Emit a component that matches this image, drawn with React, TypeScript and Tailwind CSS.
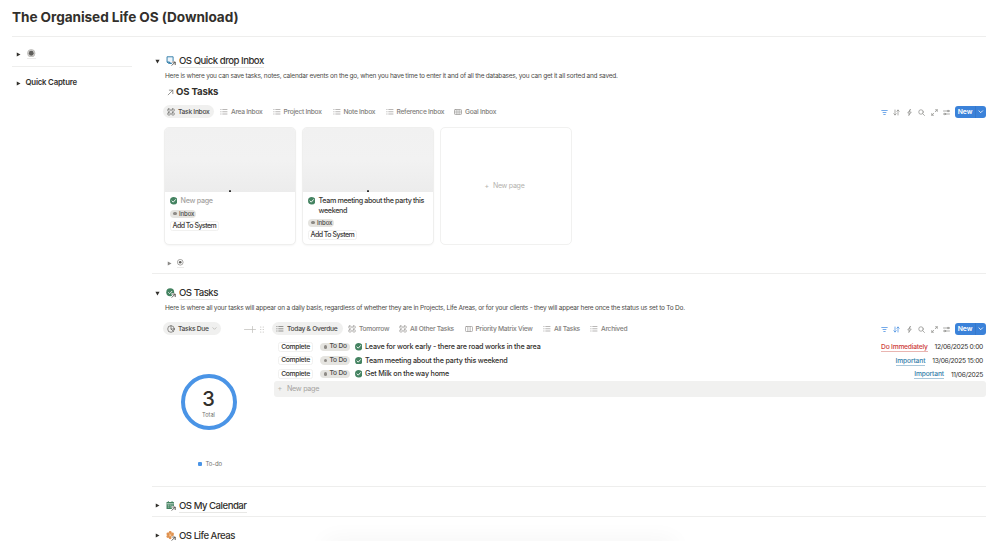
import React from "react";

type IconProps = { className?: string };

const stroke = {
  fill: "none",
  stroke: "currentColor",
  strokeWidth: 1.4,
  strokeLinecap: "round" as const,
  strokeLinejoin: "round" as const,
};

const BoardIcon = ({ className = "size-2" }: IconProps) => (
  <svg viewBox="0 0 16 16" className={className} {...stroke}>
    <rect x="1.5" y="2" width="5" height="4.5" rx="1.2" />
    <rect x="9.5" y="2" width="5" height="4.5" rx="1.2" />
    <rect x="1.5" y="9.5" width="5" height="4.5" rx="1.2" />
    <rect x="9.5" y="9.5" width="5" height="4.5" rx="1.2" />
  </svg>
);
const ListIcon = ({ className = "size-2" }: IconProps) => (
  <svg viewBox="0 0 16 16" className={className} {...stroke}>
    <path d="M5.500 3h8.500M5.500 7.500h8.500M5.500 12h8.500M1.500 3h.6M1.500 7.500h.6M1.500 12h.6" />
  </svg>
);
const TableIcon = ({ className = "size-2" }: IconProps) => (
  <svg viewBox="0 0 16 16" className={className} {...stroke}>
    <rect x="1" y="3" width="14" height="10" rx="1.5" />
    <path d="M1 6.300h14M1 9.700h14M5.700 3v10M10.300 3v10" strokeWidth={1.1} />
  </svg>
);
const ColumnsIcon = ({ className = "size-2" }: IconProps) => (
  <svg viewBox="0 0 16 16" className={className} {...stroke}>
    <rect x="1" y="3" width="14" height="10" rx="1.5" />
    <path d="M5.700 3v10M10.300 3v10" />
  </svg>
);
const PieIcon = ({ className = "size-2" }: IconProps) => (
  <svg viewBox="0 0 16 16" className={className} {...stroke} strokeWidth={1.2}>
    <circle cx="8" cy="8" r="6.6" />
    <path d="M8 1.400V8l4.600 4.600M8 8h6.600" />
  </svg>
);
const Chevron = ({ className = "size-1.5" }: IconProps) => (
  <svg viewBox="0 0 12 12" className={className} {...stroke} strokeWidth={1.8}>
    <path d="M2 4l4 4 4-4" />
  </svg>
);
const CheckIcon = ({ className = "size-[7px]" }: IconProps) => (
  <svg viewBox="0 0 16 16" className={`shrink-0 ${className}`}>
    <circle cx="8" cy="8" r="8" fill="#448361" />
    <path d="M4.400 8.400l2.500 2.600 4.800-5.400" fill="none" stroke="#fff" strokeWidth="2" strokeLinecap="round" strokeLinejoin="round" />
  </svg>
);
const ArrowBadge = () => (
  <g fill="none" strokeLinecap="square">
    <path d="M11.500 17.500L17 12M12.800 11.500h4.700v4.700" stroke="#fff" strokeWidth="4.400" />
    <path d="M11.500 17.500L17 12M12.800 11.500h4.700v4.700" stroke="#55534e" strokeWidth="1.800" />
  </g>
);
const InboxLinkIcon = () => (
  <svg viewBox="0 0 19 19" className="size-[10px]">
    <path d="M2 1.500h11.500v12.300H4.200L2 11.600z" fill="#eef5fb" stroke="#337ea9" strokeWidth="1.800" />
    <path d="M2 11.600h4l1.500 2h4" fill="none" stroke="#337ea9" strokeWidth="2" />
    <ArrowBadge />
  </svg>
);
const TaskLinkIcon = () => (
  <svg viewBox="0 0 19 19" className="size-[10px]">
    <circle cx="8" cy="8" r="7.500" fill="#448361" />
    <path d="M4.400 8.200l2.500 2.500 4.800-5" fill="none" stroke="#fff" strokeWidth="1.600" />
    <ArrowBadge />
  </svg>
);
const CalendarLinkIcon = () => (
  <svg viewBox="0 0 19 19" className="size-[10px]">
    <path d="M1 2h2.500V.5h2V2h5V.5h2V2H15v13H1z" fill="#448361" />
    <path d="M1.500 5.200h13M3.500 8h2M7 8h2M10.500 8h2M3.500 11.500h2M7 11.500h2" stroke="#fff" strokeWidth="1.200" />
    <ArrowBadge />
  </svg>
);
const LifeLinkIcon = () => (
  <svg viewBox="0 0 19 19" className="size-[10px]">
    <g fill="#e09250">
      <circle cx="8" cy="3" r="2.800" />
      <circle cx="12.300" cy="5.500" r="2.800" />
      <circle cx="12.300" cy="10.500" r="2.800" />
      <circle cx="8" cy="13" r="2.800" />
      <circle cx="3.700" cy="10.500" r="2.800" />
      <circle cx="3.700" cy="5.500" r="2.800" />
    </g>
    <circle cx="8" cy="8" r="2.200" fill="#f6dfca" stroke="#d9730d" />
    <ArrowBadge />
  </svg>
);

const Triangle = ({ open = false, className = "text-[#32302c]" }: { open?: boolean; className?: string }) => (
  <svg viewBox="0 0 10 10" className={`size-[5px] shrink-0 ${className}`}>
    <path d={open ? "M.8 1.500h8.400L5 9z" : "M1.500 .8v8.400L9 5z"} fill="currentColor" />
  </svg>
);

const Target = ({ filled = false }: { filled?: boolean }) => (
  <span className={`flex border-b border-[#ecebea] ${filled ? "pb-px" : "pt-px pb-px"}`}>
    <svg viewBox="0 0 16 16" className={filled ? "size-[8.500px]" : "size-[6.500px]"}>
      <circle cx="8" cy="8" r="7" fill={filled ? "#d0cfcd" : "none"} stroke={filled ? "#b9b7b4" : "#73726e"} strokeWidth="1.500" />
      <circle cx="8" cy="8" r={filled ? 4.5 : 3.2} fill="#5f5e5b" />
    </svg>
  </span>
);

const Heading = ({ icon, label, open = false }: { icon: React.ReactNode; label: string; open?: boolean }) => (
  <div className="flex h-4 items-center pl-[3px]">
    <Triangle open={open} />
    <span className="ml-[6px] flex w-[10px]">{icon}</span>
    <span className="ml-[3px] border-b border-[#e8e8e6] pt-px text-[9.600px] leading-[12px] font-medium tracking-[-0.49px]">{label}</span>
  </div>
);

type TabData = { label: string; icon: React.ReactNode; width: string };
const Tab = ({ label, icon, width, active = false }: TabData & { active?: boolean }) => (
  <div className={`flex h-[13px] shrink-0 items-center gap-[3px] rounded-full pl-[4px] text-[6.700px] font-medium tracking-[-0.29px] ${width} ${active ? "bg-[#f0f0ef] text-[#4b4a47]" : "text-[#82807c]"}`}>
    <span className="opacity-80">{icon}</span>
    <span className="pt-px">{label}</span>
  </div>
);

const Toolbar = ({ sorted = false }: { sorted?: boolean }) => (
  <div className="ml-auto flex items-center pt-px text-[#8a8986]">
    <div className="flex gap-[5.500px]">
      <svg viewBox="0 0 14 14" className="size-[7px] text-[#5b9be6]" {...stroke} strokeWidth={1.7}><path d="M1.500 3h11M4 7h6M5.500 11h3" /></svg>
      <svg viewBox="0 0 14 14" className={`size-[7px] ${sorted ? "text-[#3f8ae0]" : ""}`} {...stroke}><path d="M4 2v10M1.500 9.500L4 12l2.500-2.500M10 12V2M7.500 4.500L10 2l2.500 2.500" /></svg>
      <svg viewBox="0 0 14 14" className="size-[7px]" {...stroke}><path d="M8.500 1L3.500 8h3.200L5.500 13l5-7H7.300z" /></svg>
      <svg viewBox="0 0 14 14" className="size-[7px]" {...stroke}><circle cx="6" cy="6" r="4.500" /><path d="M9.500 9.500L13 13" /></svg>
      <svg viewBox="0 0 14 14" className="size-[7px]" {...stroke}><path d="M8.500 5.500L12.500 1.500M9 1.500h3.500V5M5.500 8.500L1.500 12.500M1.500 9v3.500H5" /></svg>
      <svg viewBox="0 0 14 14" className="size-[7px]" {...stroke}><path d="M1 4h7.500M12 4h1M1 10h1M5.500 10H13" /><circle cx="10.200" cy="4" r="1.600" /><circle cx="3.800" cy="10" r="1.600" /></svg>
    </div>
    <div className="ml-[5px] flex h-[12.500px] w-[31px] items-center rounded-[3px] bg-[#3b82d9] text-white">
      <span className="w-5 text-center text-[6.800px] font-semibold tracking-[-0.1px]">New</span>
      <span className="flex h-full flex-1 items-center justify-center border-l border-[#3778ca]"><Chevron className="size-[5.500px]" /></span>
    </div>
  </div>
);

const Status = ({ label, className }: { label: string; className: string }) => (
  <span className={`flex items-center gap-[2.500px] rounded-full bg-[#e5e4e0] pl-[3.500px] font-medium text-[#4b4a47] ${className}`}>
    <span className="size-[3.500px] shrink-0 rounded-full bg-[#8e8b86]" />
    <span>{label}</span>
  </span>
);

const Card = ({ title, empty = false }: { title: string; empty?: boolean }) => (
  <div className="flex h-[118px] w-[132px] flex-col overflow-hidden rounded-[5px] border border-[#efefee] bg-white shadow-[0_1px_2px_rgba(0,0,0,0.04)]">
    <div className="flex h-[64px] shrink-0 items-end justify-center bg-linear-to-b from-[#f1f1f1] via-[#f2f2f2] to-[#ececec]">
      <span className="h-[1.500px] w-[2px] rounded-t-full bg-[#333]" />
    </div>
    <div className="flex flex-col items-start pt-[4px] pl-[5px]">
      <div className="flex items-start gap-[3.500px]">
        <CheckIcon className="mt-[1.500px] size-[7.500px]" />
        <div className={`w-[112px] text-[7.200px] leading-[10px] font-medium whitespace-normal ${empty ? "tracking-[-0.3px] text-[#a5a39f]" : "tracking-[-0.37px] text-[#3a3936]"}`}>{title}</div>
      </div>
      <Status label="Inbox" className={`h-[8px] w-[26px] text-[6px] tracking-[-0.1px] ${empty ? "mt-[4px]" : "mt-[3px]"}`} />
      <span className="mt-[3px] flex h-[10px] items-center rounded-[2.500px] border border-[#f1f1f0] px-[2px] pt-px text-[7px] font-medium tracking-[-0.52px] text-[#3a3936]">Add To System</span>
    </div>
  </div>
);

const inboxTabs: TabData[] = [
  { label: "Area Inbox", icon: <ListIcon />, width: "w-[52.500px]" },
  { label: "Project Inbox", icon: <ListIcon />, width: "w-[60px]" },
  { label: "Note Inbox", icon: <ListIcon />, width: "w-[53px]" },
  { label: "Reference Inbox", icon: <ListIcon />, width: "w-[68.500px]" },
  { label: "Goal Inbox", icon: <TableIcon />, width: "w-[54px]" },
];

const taskTabs: TabData[] = [
  { label: "Tomorrow", icon: <BoardIcon />, width: "w-[51px]" },
  { label: "All Other Tasks", icon: <BoardIcon />, width: "w-[65.500px]" },
  { label: "Priority Matrix View", icon: <ColumnsIcon />, width: "w-[78.500px]" },
  { label: "All Tasks", icon: <ListIcon />, width: "w-[47px]" },
  { label: "Archived", icon: <ListIcon />, width: "w-[44px]" },
];

const tasks = [
  { title: "Leave for work early - there are road works in the area", priority: "Do Immediately", urgent: true, date: "12/06/2025 0:00" },
  { title: "Team meeting about the party this weekend", priority: "Important", urgent: false, date: "13/06/2025 15:00" },
  { title: "Get Milk on the way home", priority: "Important", urgent: false, date: "11/06/2025" },
];

export default function App() {
  return (
    <div className="relative flex h-[541px] w-[1005px] flex-col overflow-hidden bg-white pr-[19px] pl-3 font-['Inter',sans-serif] whitespace-nowrap text-[#32302c]">
      <header className="flex h-[36.500px] shrink-0 items-center border-b border-[#eeeeed]">
        <h1 className="text-[13.600px] leading-none font-bold tracking-[-0.06px]">The Organised Life OS (Download)</h1>
      </header>
      <div className="flex">
        <aside className="w-[120px] shrink-0">
          <div className="flex h-[30px] items-center gap-[6px] border-b border-[#eeeeed] pt-[6px] pl-[4px]">
            <Triangle />
            <Target filled />
          </div>
          <div className="flex h-[33px] items-center gap-[4.500px] pl-[4px]">
            <Triangle />
            <span className="text-[7.800px] font-semibold tracking-[-0.2px]">Quick Capture</span>
          </div>
        </aside>

        <main className="ml-5 w-[834px] shrink-0">
          <section className="h-[237.500px] border-b border-[#eeeeed] pt-[16.500px]">
            <Heading open icon={<InboxLinkIcon />} label="OS Quick drop Inbox" />
            <p className="flex h-[14px] items-center pt-px pl-[13px] text-[6.500px] tracking-[-0.227px] text-[#4b4a47]">
              Here is where you can save tasks, notes, calendar events on the go, when you have time to enter it and of all the databases, you can get it all sorted and saved.
            </p>
            <div className="flex h-[18px] items-center pl-[15px]">
              <svg viewBox="0 0 12 12" className="size-[7px] text-[#6b6a66]" {...stroke} strokeWidth={1.2}><path d="M2 10L10 2M4 2h6v6" /></svg>
              <h2 className="ml-[2px] text-[9.600px] font-bold tracking-[-0.15px]">OS Tasks</h2>
            </div>
            <div className="flex h-[20px] items-center pt-px pl-[11px]">
              <Tab active icon={<BoardIcon />} label="Task Inbox" width="w-[51px]" />
              <div className="ml-[2px] flex">{inboxTabs.map((t) => <Tab key={t.label} {...t} />)}</div>
              <Toolbar />
            </div>
            <div className="mt-[5.500px] flex gap-[6px] pl-[11.500px]">
              <Card title="New page" empty />
              <Card title="Team meeting about the party this weekend" />
              <div className="flex h-[118px] w-[132px] items-center justify-center gap-[4px] rounded-[5px] border border-[#f1f1f0] pt-[2px] pr-[2px] text-[7px] tracking-[-0.25px] text-[#b4b2ae]">
                <span>+</span>
                <span>New page</span>
              </div>
            </div>
            <div className="mt-[13px] flex h-[10px] items-center gap-[5px] pt-px pl-[15px]">
              <Triangle className="text-[#8a8986]" />
              <Target />
            </div>
          </section>

          <section className="h-[212.500px] border-b border-[#eeeeed] pt-[11px]">
            <Heading open icon={<TaskLinkIcon />} label="OS Tasks" />
            <p className="flex h-[14px] items-center pt-px pl-[13px] text-[6.500px] tracking-[-0.227px] text-[#4b4a47]">
              Here is where all your tasks will appear on a daily basis, regardless of whether they are in Projects, Life Areas, or for your clients - they will appear here once the status us set to To Do.
            </p>
            <div className="mt-[3px] flex h-[20px] items-center pt-px pl-[11px]">
              <div className="flex h-[13px] w-[58px] items-center gap-[3px] rounded-full bg-[#f0f0ef] pl-[4px] text-[6.700px] font-medium tracking-[-0.28px] text-[#4b4a47]">
                <PieIcon />
                <span className="pt-px">Tasks Due</span>
                <Chevron className="size-[5px] text-[#b4b2ae]" />
              </div>
              <div className="ml-[23px] flex w-[28px] items-center gap-[4px] pt-px text-[#bdbbb8]">
                <svg viewBox="0 0 24 14" className="h-[7px] w-[12px]" {...stroke}><path d="M1 7h22M17 1v12" /></svg>
                <svg viewBox="0 0 8 14" className="h-[7px] w-[4px]" fill="currentColor">
                  {[2, 7, 12].map((y) => <g key={y}><circle cx="1.500" cy={y} r="1.200" /><circle cx="6.500" cy={y} r="1.200" /></g>)}
                </svg>
              </div>
              <Tab active icon={<ListIcon />} label="Today & Overdue" width="w-[71px]" />
              <div className="ml-px flex">{taskTabs.map((t) => <Tab key={t.label} {...t} />)}</div>
              <Toolbar sorted />
            </div>
            <div className="flex">
              <div className="flex w-[122px] flex-col items-center pt-[35.500px] pr-[9px]">
                <div className="flex size-[56px] flex-col items-center justify-center rounded-full border-4 border-[#4a94e6] pt-[4px]">
                  <span className="text-[20px] leading-[20px] font-medium">3</span>
                  <span className="mt-[2px] text-[5.600px] leading-[8px] text-[#73726e]">Total</span>
                </div>
                <div className="mt-[30px] flex items-center gap-[3.500px] pl-[3px] text-[6px] leading-[8px] tracking-[-0.15px] text-[#73726e]">
                  <span className="size-[4px] rounded-[1px] bg-[#4a94e6]" />
                  To-do
                </div>
              </div>
              <div className="w-[712px] pt-[2px]">
                {tasks.map((t) => (
                  <div key={t.title} className="flex h-[13.700px] items-center pl-[4px] text-[7.200px] font-medium tracking-[-0.2px]">
                    <span className="flex h-[9.500px] w-[35px] items-center justify-center rounded-[2.500px] border border-[#f1f1f0] text-[6.800px] tracking-[-0.33px]">Complete</span>
                    <Status label="To Do" className="ml-[7px] h-[8.500px] w-[30px] text-[6.600px]" />
                    <CheckIcon className="ml-[4.500px] size-[7.500px]" />
                    <span className="ml-[3px] pt-px">{t.title}</span>
                    <span className={`ml-auto border-b pt-px text-[6.700px] leading-[8px] ${t.urgent ? "border-[#e9b5b1] tracking-[-0.22px] text-[#cd3c3a]" : "border-[#a8c7da] tracking-[-0.15px] text-[#337ea9]"}`}>{t.priority}</span>
                    <span className="mr-[3px] ml-[7px] pt-px text-[6.700px] font-normal tracking-[-0.3px]">{t.date}</span>
                  </div>
                ))}
                <div className="flex h-[15.500px] items-center gap-[5px] rounded-[3px] bg-[#f1f1f0] pt-[2px] pl-[3.500px] text-[7.200px] tracking-[-0.3px] text-[#a5a39f]">
                  <span className="text-[#b4b2ae]">+</span>
                  <span>New page</span>
                </div>
              </div>
            </div>
          </section>

          <section className="h-[30px] border-b border-[#eeeeed] pt-[11px]">
            <Heading icon={<CalendarLinkIcon />} label="OS My Calendar" />
          </section>
          <section className="h-[25px] pt-[11px]">
            <Heading icon={<LifeLinkIcon />} label="OS Life Areas" />
          </section>
        </main>
      </div>
      <div className="pointer-events-none absolute -bottom-4 left-[325px] h-4 w-[350px] rounded-full shadow-[0_0_22px_2px_rgba(0,0,0,0.045)]" />
    </div>
  );
}
